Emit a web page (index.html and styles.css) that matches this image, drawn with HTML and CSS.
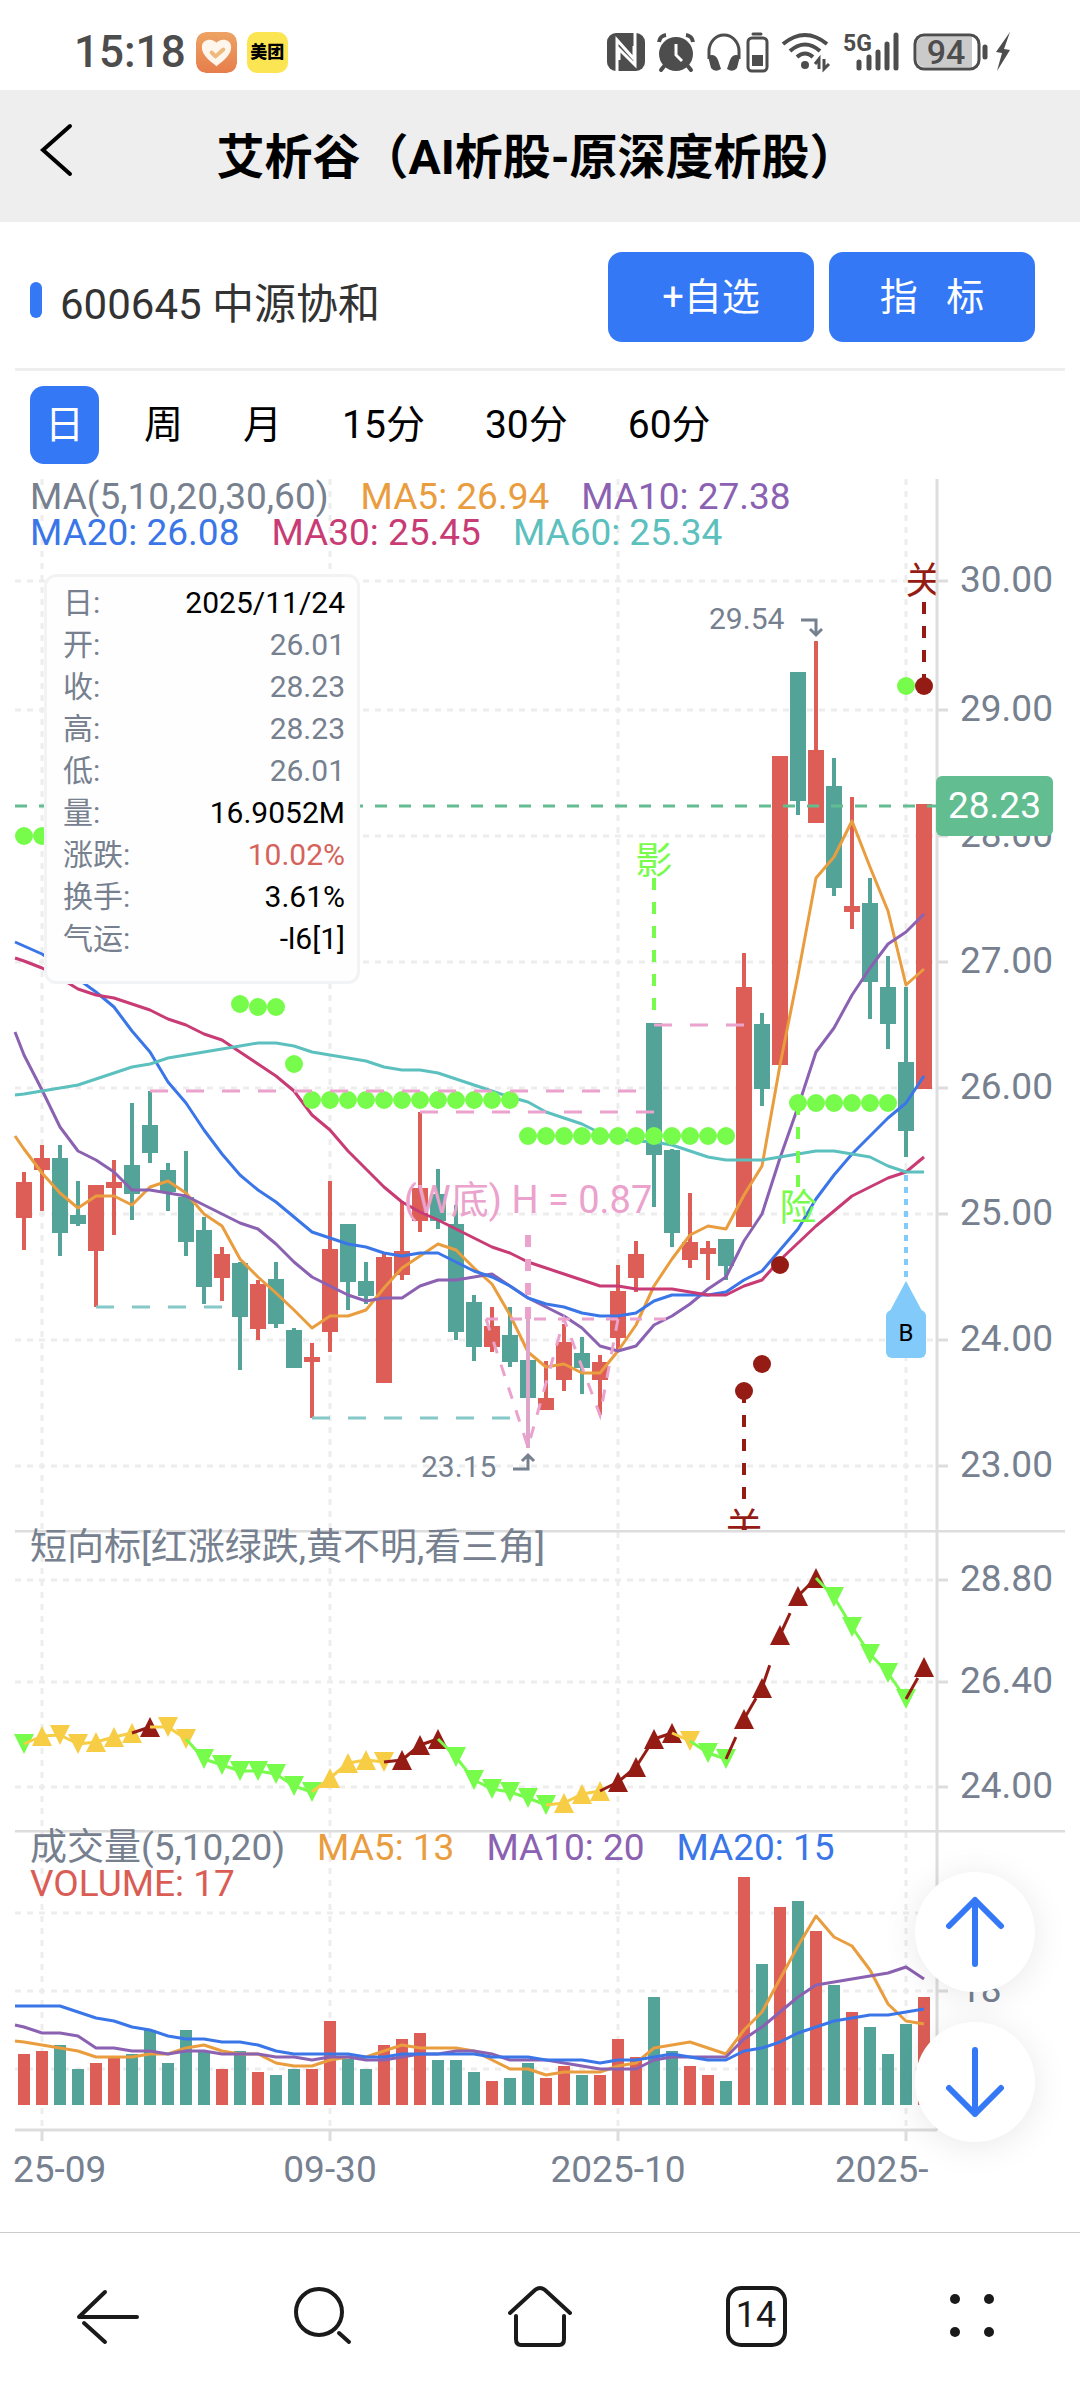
FILE: index.html
```html
<!DOCTYPE html>
<html lang="zh-CN">
<head>
  <meta charset="UTF-8" />
  <meta name="viewport" content="width=device-width, initial-scale=1" />
  <title>艾析谷（AI析股-原深度析股）</title>
  <link rel="stylesheet" href="styles.css">
</head>
<body>

  <div class="status-bar">
    <span class="clock">15:18</span>
    <svg class="app-icon" viewBox="0 0 42 42">
      <defs>
        <linearGradient id="heartBg" x1="0" y1="0" x2="0" y2="1">
          <stop offset="0" stop-color="#eda364" />
          <stop offset="1" stop-color="#e77d4c" />
        </linearGradient>
      </defs>
      <rect width="42" height="42" rx="10" fill="url(#heartBg)" />
      <path d="M21 35 C13 29 6 23 6 16 C6 10 10 8 14 8 C17 8 20 10 21 11 C22 10 25 8 28 8 C32 8 36 10 36 16 C36 23 29 29 21 35 Z" fill="#fef6ec" />
      <path d="M16 21 L20 25 L28 18" fill="none" stroke="#efb87c" stroke-width="4" stroke-linecap="round" stroke-linejoin="round" />
    </svg>
    <span class="app-icon meituan">美团</span>

    <div class="status-icons">
      <!-- NFC -->
      <svg width="38" height="40" viewBox="0 0 38 40">
        <rect x="0" y="1" width="38" height="38" rx="9" fill="#4d4d4d" />
        <path d="M10 39 V8 L27 27 V14 M28 1 V33 L12 17 V28" fill="none" stroke="#fff" stroke-width="3" />
      </svg>
      <!-- alarm -->
      <svg width="38" height="40" viewBox="0 0 38 40">
        <circle cx="19" cy="22" r="17" fill="#4d4d4d" />
        <path d="M2 10 A8 8 0 0 1 9 3 M29 3 A8 8 0 0 1 36 10" fill="none" stroke="#4d4d4d" stroke-width="4" />
        <path d="M8 33 L4 38 M30 33 L34 38" stroke="#4d4d4d" stroke-width="4" stroke-linecap="round" />
        <path d="M19 12 V23 L25 29" fill="none" stroke="#fff" stroke-width="3" />
      </svg>
      <!-- headset with its battery -->
      <svg width="62" height="40" viewBox="0 0 62 40">
        <path d="M2 27 V19 A15 16 0 0 1 32 19 V27" fill="none" stroke="#4d4d4d" stroke-width="3" />
        <path d="M1 24 Q8 21 11 28 L14 37 Q8 41 4 36 Z M33 24 Q26 21 23 28 L20 37 Q26 41 30 36 Z" fill="#4d4d4d" />
        <rect x="41" y="6" width="19" height="33" rx="4" fill="none" stroke="#4d4d4d" stroke-width="3" />
        <path d="M46 2 H54" stroke="#4d4d4d" stroke-width="3" stroke-linecap="round" />
        <rect x="45" y="23" width="11" height="11" fill="#4d4d4d" />
      </svg>
      <!-- wifi -->
      <svg width="50" height="40" viewBox="0 0 50 40">
        <g fill="none" stroke="#4d4d4d" stroke-width="4">
          <path d="M2 12 Q24 -6 46 12" />
          <path d="M9 19 Q24 6 39 19" />
          <path d="M16 25 Q24 18 32 25" />
        </g>
        <circle cx="24" cy="33" r="4" fill="#4d4d4d" />
        <path d="M38 37 V27 L34 32 M43 27 V37 L48 32" fill="none" stroke="#4d4d4d" stroke-width="3" />
      </svg>
      <!-- signal -->
      <svg width="58" height="40" viewBox="0 0 58 40">
        <text class="net-type" x="0" y="19">5G</text>
        <path d="M16 30 V36 M26 25 V36 M35 20 V36 M44 12 V36 M53 3 V36" stroke="#4d4d4d" stroke-width="5" stroke-linecap="round" />
      </svg>
      <!-- battery -->
      <svg width="98" height="40" viewBox="0 0 98 40">
        <rect x="2" y="3" width="64" height="34" rx="9" fill="#fff" stroke="#4d4d4d" stroke-width="3" />
        <path d="M12 5 H59 V35 H12 Q4 35 4 28 V12 Q4 5 12 5 Z" fill="#cacaca" />
        <text class="battery-level" x="33" y="32">94</text>
        <path d="M72 15 V25" stroke="#4d4d4d" stroke-width="5" stroke-linecap="round" />
        <path d="M97 0 L83 20 L89 21 L84 39 L97 18 L91 17 Z" fill="#4d4d4d" />
      </svg>
    </div>
  </div>

  <header class="title-bar">
    <button class="back-btn" aria-label="返回">
      <svg width="40" height="56" viewBox="0 0 40 56"><path d="M34 3 L7 27 L34 51" /></svg>
    </button>
    <h1>艾析谷（AI析股-原深度析股）</h1>
  </header>

  <main>
    <section class="stock-row">
      <h2>600645 中源协和</h2>
      <button class="primary-btn">+自选</button>
      <button class="primary-btn">指&nbsp;&nbsp; 标</button>
    </section>

    <nav class="period-tabs">
      <button class="active">日</button>
      <button>周</button>
      <button>月</button>
      <button>15分</button>
      <button>30分</button>
      <button>60分</button>
    </nav>

    <section class="pane">
      <svg id="priceChart" class="chart" viewBox="0 479 1080 1051"></svg>
      <div class="legend">
        <span>MA(5,10,20,30,60)</span>
        <span class="ma5">MA5: 26.94</span>
        <span class="ma10">MA10: 27.38</span>
        <span class="ma20">MA20: 26.08</span>
        <span class="ma30">MA30: 25.45</span>
        <span class="ma60">MA60: 25.34</span>
      </div>
      <dl class="tooltip">
        <div><dt>日:</dt><dd>2025/11/24</dd></div>
        <div><dt>开:</dt><dd class="muted">26.01</dd></div>
        <div><dt>收:</dt><dd class="muted">28.23</dd></div>
        <div><dt>高:</dt><dd class="muted">28.23</dd></div>
        <div><dt>低:</dt><dd class="muted">26.01</dd></div>
        <div><dt>量:</dt><dd>16.9052M</dd></div>
        <div><dt>涨跌:</dt><dd class="rise">10.02%</dd></div>
        <div><dt>换手:</dt><dd>3.61%</dd></div>
        <div><dt>气运:</dt><dd>-l6[1]</dd></div>
      </dl>
    </section>

    <section class="pane">
      <svg id="trendChart" class="chart" viewBox="0 1530 1080 300"></svg>
      <div class="legend">
        <span>短向标[红涨绿跌,黄不明,看三角]</span>
      </div>
    </section>

    <section class="pane">
      <svg id="volumeChart" class="chart" viewBox="0 1830 1080 402"></svg>
      <div class="legend">
        <span>成交量(5,10,20)</span>
        <span class="ma5">MA5: 13</span>
        <span class="ma10">MA10: 20</span>
        <span class="ma20">MA20: 15</span>
        <span class="volume">VOLUME: 17</span>
      </div>
      <div class="float-btns">
        <button aria-label="上一个">
          <svg width="60" height="72" viewBox="0 0 60 72"><path d="M30 68 V4 M4 30 L30 4 L56 30" /></svg>
        </button>
        <button aria-label="下一个">
          <svg width="60" height="72" viewBox="0 0 60 72"><path d="M30 4 V68 M4 42 L30 68 L56 42" /></svg>
        </button>
      </div>
    </section>
  </main>

  <nav class="bottom-nav">
    <button aria-label="后退">
      <svg width="70" height="64" viewBox="0 0 70 64"><path d="M64 32 H6 L32 7 M11 38 L32 57" /></svg>
    </button>
    <button aria-label="搜索">
      <svg width="70" height="64" viewBox="0 0 70 64"><circle cx="30" cy="27" r="23" /><path d="M50 48 L60 57" /></svg>
    </button>
    <button aria-label="主页">
      <svg width="70" height="64" viewBox="0 0 70 64"><path d="M5 28 L30 5 Q35 1 40 5 L65 28 M11 31 V54 Q11 60 16 60 H54 Q59 60 59 54 V31" /></svg>
    </button>
    <button aria-label="标签页"><span class="tab-count">14</span></button>
    <button aria-label="菜单">
      <svg class="dots" width="70" height="64" viewBox="0 0 70 64">
        <circle cx="18" cy="14" r="5" /><circle cx="52" cy="14" r="5" />
        <circle cx="18" cy="47" r="5" /><circle cx="52" cy="47" r="5" />
      </svg>
    </button>
  </nav>

  <script src="chart.js"></script>

</body>
</html>
```
FILE: styles.css
```css
* {
  box-sizing: border-box;
}
body {
  margin: 0;
  min-height: 100vh;
  display: flex;
  flex-direction: column;
  background: #fff;
  color: #000;
  font-family: Roboto, "Noto Sans CJK SC", sans-serif;
  font-size: 37px;
}
button {
  border: none;
  background: none;
  padding: 0;
  font: inherit;
  color: inherit;
  cursor: pointer;
}

/* status bar */
.status-bar {
  display: flex;
  align-items: center;
  gap: 10px;
  height: 90px;
  padding: 14px 69px 0 74px;
}
.clock {
  font-size: 44px;
  font-weight: 500;
  color: #4d4d4d;
}
.app-icon {
  width: 41px;
  height: 41px;
  border-radius: 10px;
}
.meituan {
  background: #fce553;
  font-size: 17px;
  font-weight: 900;
  line-height: 41px;
  text-align: center;
}
.status-icons {
  display: flex;
  gap: 12px;
  margin-left: auto;
}
.status-icons svg {
  overflow: visible;
}
.net-type {
  font-size: 23px;
  font-weight: 700;
  fill: #4d4d4d;
}
.battery-level {
  font-size: 34px;
  font-weight: 500;
  fill: #4d4d4d;
  text-anchor: middle;
}

/* title bar */
.title-bar {
  display: grid;
  grid-template-columns: 72px 1fr 78px;
  align-items: center;
  height: 132px;
  padding-bottom: 6px;
  background: #eee;
}
.title-bar h1 {
  margin: 0;
  font-size: 48px;
  font-weight: 700;
  text-align: center;
  white-space: nowrap;
}
.back-btn {
  padding: 0 0 4px 36px;
}
.back-btn svg {
  display: block;
}
.back-btn path {
  fill: none;
  stroke: #000;
  stroke-width: 4;
  stroke-linecap: round;
}

/* stock name and actions */
.stock-row {
  display: flex;
  align-items: center;
  gap: 15px;
  margin: 0 15px;
  padding: 30px 30px 26px 15px;
  border-bottom: 3px solid #eee;
}
.stock-row h2 {
  display: flex;
  align-items: center;
  gap: 18px;
  flex: 1;
  margin: 0;
  padding-top: 6px;
  font-size: 42px;
  font-weight: 400;
  color: #333;
}
.stock-row h2::before {
  content: "";
  width: 12px;
  height: 36px;
  border-radius: 6px;
  background: #3478f6;
}
.primary-btn {
  width: 206px;
  height: 90px;
  padding-bottom: 8px;
  border-radius: 14px;
  background: #3478f6;
  color: #fff;
  font-size: 38px;
}

/* period tabs */
.period-tabs {
  display: flex;
  gap: 30px;
  padding: 15px 30px;
}
.period-tabs button {
  height: 78px;
  padding: 0 15px 8px;
  border-radius: 14px;
  font-size: 39px;
}
.period-tabs .active {
  background: #3478f6;
  color: #fff;
}

/* chart panes */
.pane {
  position: relative;
}
.chart {
  display: block;
  width: 100%;
  font-size: 37px;
}
.legend {
  position: absolute;
  top: 0;
  left: 30px;
  right: 13%;
  display: flex;
  flex-wrap: wrap;
  column-gap: 32px;
  line-height: 36px;
  color: #76808f;
}
.ma5 { color: #e99d3e; }
.ma10 { color: #8b61b2; }
.ma20 { color: #3a76e8; }
.ma30 { color: #c83b74; }
.ma60 { color: #5cc0be; }
.volume { color: #da5d55; }

.grid {
  stroke: #ededed;
  stroke-width: 3;
  stroke-dasharray: 6 6;
}
.axis {
  stroke: #ddd;
  stroke-width: 3;
}
.axis-label, .note {
  fill: #76808f;
}
.axis-label.middle {
  text-anchor: middle;
}
.note {
  font-size: 30px;
}
.note-arrow {
  fill: none;
  stroke: #76808f;
  stroke-width: 3;
}
.line {
  fill: none;
  stroke: currentColor;
  stroke-width: 3;
  stroke-linejoin: round;
}
.up { fill: #dc5e56; stroke: #dc5e56; }
.down { fill: #53a399; stroke: #53a399; }
.wick { stroke-width: 4; }
.body, .bar { stroke: none; }
.green { fill: #78fc4c; stroke: #78fc4c; }
.red { fill: #941c14; stroke: #941c14; }
.yellow { fill: #f7cd46; stroke: #f7cd46; }
.dot, .mark, .tri { stroke: none; }
.mark { text-anchor: middle; }
.drop { stroke-width: 4; stroke-dasharray: 12 12; }
.seg { stroke-width: 3; stroke-dasharray: 24 24; }
.high-line, .low-line {
  stroke: #eba2cc;
  stroke-width: 3;
  stroke-dasharray: 18 18;
}
.low-line {
  stroke: #86c7c7;
}
.price-line {
  stroke: #62bd91;
  stroke-width: 3;
  stroke-dasharray: 12 12;
}
.price-tag {
  fill: #62bd91;
}
.price-text {
  fill: #fff;
}
.pattern {
  fill: none;
  stroke: #eba2cc;
  stroke-width: 3;
  stroke-dasharray: 12 12;
}
.pattern-stem {
  stroke: #eba2cc;
  stroke-width: 6;
  stroke-dasharray: 12 12;
}
.pattern-tail {
  stroke: #dda6c9;
  stroke-width: 4;
}
.pattern-text {
  fill: #eba2cc;
  font-size: 38px;
  text-anchor: middle;
}
.buy {
  fill: #81caf9;
}
.buy-line {
  stroke: #81caf9;
  stroke-width: 4;
  stroke-dasharray: 6 6;
}
.buy-text {
  font-size: 24px;
  text-anchor: middle;
}

/* candle details */
.tooltip {
  position: absolute;
  top: 95px;
  left: 44px;
  width: 316px;
  margin: 0;
  padding: 5px 12px 21px 16px;
  border: 3px solid #f2f3f5;
  border-radius: 12px;
  background: #fefefe;
  font-size: 30px;
  line-height: 42px;
}
.tooltip div {
  display: flex;
  justify-content: space-between;
}
.tooltip dt {
  color: #76808f;
}
.tooltip dd {
  margin: 0;
}
.tooltip .muted {
  color: #76808f;
}
.tooltip .rise {
  color: #d5635b;
}

/* floating up/down buttons */
.float-btns {
  position: absolute;
  top: 42px;
  right: 45px;
  display: flex;
  flex-direction: column;
  gap: 30px;
}
.float-btns button {
  display: flex;
  align-items: center;
  justify-content: center;
  width: 120px;
  height: 120px;
  border-radius: 50%;
  background: #fff;
  box-shadow: 0 4px 36px rgba(0, 0, 0, 0.09);
}
.float-btns path {
  fill: none;
  stroke: #3478f6;
  stroke-width: 6;
  stroke-linecap: round;
  stroke-linejoin: round;
}

/* browser navigation */
.bottom-nav {
  flex: 1;
  display: grid;
  grid-template-columns: repeat(5, 1fr);
  min-height: 168px;
  border-top: 1px solid #ccc;
}
.bottom-nav button {
  display: flex;
  align-items: center;
  justify-content: center;
}
.bottom-nav svg {
  fill: none;
  stroke: #1a1a1a;
  stroke-width: 4;
  stroke-linecap: round;
  stroke-linejoin: round;
}
.bottom-nav .dots {
  fill: #1a1a1a;
  stroke: none;
}
.tab-count {
  width: 61px;
  height: 61px;
  border: 4px solid #1a1a1a;
  border-radius: 15px;
  font-size: 36px;
  line-height: 51px;
  text-align: center;
  color: #1a1a1a;
}
```
FILE: chart.js
```js
const LEFT = 15;
const AXIS = 937;
const VOLUME_BASE = 2105;
const x = (i) => 24 + i * 18;

// [direction, high, body top, body bottom, low, volume top]
const candles = [
  ['up', 1172, 1182, 1218, 1250, 2054], ['up', 1145, 1158, 1170, 1211, 2051],
  ['down', 1145, 1158, 1233, 1256, 2045], ['down', 1181, 1215, 1224, 1226, 2069],
  ['up', 1185, 1185, 1251, 1307, 2063], ['up', 1160, 1182, 1188, 1235, 2057],
  ['down', 1103, 1165, 1194, 1220, 2054], ['down', 1091, 1125, 1153, 1163, 2030],
  ['down', 1163, 1170, 1192, 1211, 2063], ['down', 1151, 1197, 1242, 1256, 2030],
  ['down', 1217, 1230, 1287, 1304, 2051], ['up', 1247, 1254, 1278, 1301, 2069],
  ['down', 1262, 1263, 1317, 1370, 2051], ['up', 1280, 1284, 1329, 1340, 2072],
  ['down', 1262, 1279, 1324, 1328, 2075], ['down', 1328, 1330, 1368, 1368, 2069],
  ['up', 1343, 1357, 1362, 1418, 2069], ['up', 1181, 1249, 1332, 1352, 2021],
  ['down', 1224, 1224, 1282, 1310, 2059], ['down', 1262, 1281, 1296, 1304, 2069],
  ['up', 1253, 1257, 1383, 1383, 2045], ['up', 1201, 1251, 1275, 1280, 2039],
  ['up', 1112, 1188, 1221, 1232, 2033], ['down', 1169, 1194, 1221, 1229, 2060],
  ['down', 1205, 1224, 1332, 1340, 2060], ['down', 1295, 1302, 1347, 1361, 2072],
  ['up', 1307, 1326, 1347, 1352, 2081], ['down', 1307, 1335, 1362, 1367, 2078],
  ['down', 1360, 1360, 1398, 1448, 2063], ['up', 1361, 1398, 1410, 1410, 2078],
  ['up', 1324, 1342, 1380, 1391, 2066], ['down', 1337, 1353, 1368, 1394, 2075],
  ['up', 1355, 1362, 1380, 1415, 2075], ['up', 1265, 1291, 1338, 1352, 2039],
  ['up', 1241, 1254, 1278, 1292, 2057], ['down', 1023, 1023, 1155, 1207, 1997],
  ['down', 1149, 1150, 1233, 1247, 2051], ['up', 1193, 1242, 1260, 1268, 2066],
  ['up', 1241, 1248, 1254, 1280, 2075], ['down', 1239, 1239, 1266, 1280, 2081],
  ['up', 953, 987, 1227, 1227, 1877], ['down', 1013, 1024, 1089, 1106, 1964],
  ['up', 756, 756, 1065, 1065, 1907], ['down', 672, 672, 801, 815, 1901],
  ['up', 641, 750, 823, 823, 1931], ['down', 758, 786, 888, 896, 1985],
  ['up', 797, 906, 912, 929, 2012], ['down', 878, 903, 982, 1019, 2027],
  ['down', 956, 987, 1024, 1049, 2054], ['down', 987, 1062, 1131, 1157, 2024],
  ['up', 804, 804, 1089, 1089, 1997],
];

// the first value of each line sits on the left edge of the pane
const priceLines = {
  ma5: [1136, 1149, 1173, 1193, 1208, 1196, 1196, 1205, 1187, 1181, 1193, 1214, 1226, 1259, 1277, 1293, 1310, 1328, 1316, 1316, 1310, 1288, 1268, 1256, 1244, 1250, 1268, 1284, 1315, 1352, 1367, 1364, 1373, 1373, 1351, 1325, 1286, 1259, 1235, 1226, 1229, 1195, 1166, 1065, 975, 878, 857, 821, 867, 911, 985, 969],
  ma10: [1032, 1055, 1090, 1127, 1151, 1160, 1172, 1190, 1190, 1193, 1196, 1205, 1214, 1223, 1229, 1244, 1262, 1277, 1286, 1295, 1301, 1298, 1298, 1286, 1280, 1280, 1277, 1274, 1286, 1298, 1307, 1316, 1328, 1346, 1351, 1346, 1325, 1316, 1304, 1289, 1277, 1241, 1214, 1158, 1107, 1052, 1028, 995, 968, 944, 932, 914],
  ma20: [942, 946, 954, 966, 979, 992, 1007, 1031, 1052, 1082, 1103, 1130, 1154, 1175, 1190, 1202, 1217, 1232, 1238, 1244, 1247, 1253, 1256, 1253, 1253, 1262, 1271, 1277, 1286, 1298, 1304, 1307, 1313, 1316, 1316, 1313, 1301, 1295, 1295, 1295, 1292, 1280, 1271, 1250, 1229, 1199, 1175, 1154, 1136, 1118, 1103, 1076],
  ma30: [958, 961, 968, 978, 989, 995, 998, 1004, 1010, 1019, 1025, 1034, 1040, 1052, 1064, 1076, 1091, 1115, 1130, 1151, 1169, 1187, 1202, 1212, 1220, 1229, 1238, 1247, 1253, 1262, 1268, 1274, 1280, 1286, 1286, 1289, 1289, 1289, 1292, 1295, 1295, 1286, 1280, 1260, 1243, 1226, 1211, 1196, 1187, 1178, 1172, 1157],
  ma60: [1095, 1094, 1091, 1088, 1085, 1079, 1073, 1067, 1064, 1058, 1055, 1052, 1049, 1046, 1043, 1043, 1046, 1052, 1055, 1058, 1061, 1067, 1070, 1070, 1073, 1079, 1085, 1091, 1097, 1102, 1112, 1118, 1124, 1133, 1139, 1141, 1142, 1145, 1151, 1157, 1160, 1160, 1160, 1157, 1154, 1151, 1151, 1154, 1157, 1166, 1172, 1172],
};

const volumeLines = {
  ma5: [2041, 2042, 2045, 2048, 2051, 2057, 2057, 2057, 2054, 2054, 2048, 2045, 2051, 2054, 2054, 2063, 2066, 2066, 2060, 2057, 2057, 2051, 2045, 2048, 2048, 2048, 2051, 2060, 2069, 2069, 2075, 2072, 2072, 2072, 2066, 2063, 2048, 2045, 2042, 2048, 2054, 2030, 2012, 1979, 1946, 1916, 1937, 1946, 1970, 2004, 2021, 2024],
  ma10: [2025, 2027, 2033, 2033, 2036, 2048, 2048, 2051, 2051, 2054, 2051, 2051, 2054, 2054, 2054, 2057, 2057, 2060, 2057, 2057, 2060, 2060, 2057, 2054, 2054, 2051, 2051, 2054, 2060, 2060, 2060, 2063, 2066, 2069, 2069, 2069, 2060, 2057, 2057, 2057, 2057, 2039, 2027, 2012, 1997, 1985, 1982, 1979, 1976, 1973, 1967, 1979],
  ma20: [2006, 2006, 2006, 2006, 2012, 2018, 2021, 2027, 2030, 2036, 2039, 2039, 2042, 2042, 2045, 2051, 2054, 2054, 2054, 2054, 2057, 2057, 2054, 2054, 2054, 2054, 2054, 2057, 2057, 2057, 2060, 2060, 2060, 2063, 2060, 2060, 2057, 2054, 2057, 2060, 2060, 2051, 2048, 2042, 2033, 2027, 2021, 2018, 2015, 2015, 2012, 2009],
};

// short-term trend: y, colour (g/y/r), triangle pointing up (u) or down (d)
const trend = [
  [1744, 'gd'], [1736, 'yu'], [1735, 'yd'], [1744, 'yd'], [1742, 'yu'], [1737, 'yu'], [1733, 'yu'],
  [1727, 'ru'], [1727, 'yd'], [1739, 'yd'], [1759, 'gd'], [1765, 'gd'], [1771, 'gd'], [1771, 'gd'],
  [1774, 'gd'], [1786, 'gd'], [1792, 'gd'], [1778, 'yu'], [1763, 'yu'], [1760, 'yu'], [1762, 'yd'],
  [1760, 'ru'], [1745, 'ru'], [1739, 'ru'], [1757, 'gd'], [1780, 'gd'], [1789, 'gd'], [1792, 'gd'],
  [1798, 'gd'], [1805, 'gd'], [1803, 'yu'], [1794, 'yu'], [1791, 'yu'], [1782, 'ru'], [1767, 'ru'],
  [1739, 'ru'], [1733, 'ru'], [1741, 'yd'], [1753, 'gd'], [1759, 'gd'], [1719, 'ru'], [1688, 'ru'],
  [1635, 'ru'], [1596, 'ru'], [1578, 'ru'], [1597, 'gd'], [1627, 'gd'], [1654, 'gd'], [1673, 'gd'],
  [1699, 'gd'], [1667, 'ru'],
];

// [from candle, to candle, y, colour]
const dots = [
  [0, 1, 836, 'green'], [12, 12, 1004, 'green'], [13, 14, 1007, 'green'], [15, 15, 1064, 'green'],
  [16, 27, 1100, 'green'], [28, 39, 1136, 'green'], [43, 48, 1103, 'green'], [49, 49, 686, 'green'],
  [50, 50, 686, 'red'], [42, 42, 1265, 'red'], [41, 41, 1364, 'red'], [40, 40, 1391, 'red'],
];

function line(cls, x1, y1, x2, y2) {
  return `<line class="${cls}" x1="${x1}" y1="${y1}" x2="${x2}" y2="${y2}" />`;
}

function text(cls, tx, ty, value) {
  return `<text class="${cls}" x="${tx}" y="${ty}">${value}</text>`;
}

function verticalGrid(top, bottom) {
  return [1, 17, 33, 49].map((i) => line('grid', x(i), top, x(i), bottom)).join('');
}

function levels(list) {
  return list.map(([y, label]) =>
    line('grid', LEFT, y, AXIS, y) +
    (label ? line('axis', AXIS, y, 948, y) + text('axis-label', 960, y + 11, label) : '')
  ).join('');
}

function maLines(lines) {
  return Object.entries(lines).map(([name, values]) => {
    const points = values.map((y, n) => `${n ? x(n - 1) : LEFT},${y}`).join(' ');
    return `<polyline class="line ${name}" points="${points}" />`;
  }).join('');
}

function drawPrice() {
  let out = '<clipPath id="plot"><rect x="15" y="479" width="921" height="1051" /></clipPath>';
  out += verticalGrid(479, 1530);
  out += levels([
    [581, '30.00'], [710, '29.00'], [836, '28.00'], [962, '27.00'],
    [1088, '26.00'], [1214, '25.00'], [1340, '24.00'], [1466, '23.00'],
  ]);

  candles.forEach(([dir, high, top, bottom, low], i) => {
    out += line(`${dir} wick`, x(i), high, x(i), low);
    out += `<rect class="${dir} body" x="${x(i) - 8}" y="${top}" width="16" height="${bottom - top}" />`;
  });
  out += maLines(priceLines);

  // double bottom
  out += line('pattern-stem', 528, 1235, 528, 1319) + line('pattern-tail', 528, 1319, 528, 1448);
  out += '<path class="pattern" d="M486 1319 H666 M486 1319 L528 1447 L564 1319 L600 1415 L618 1319" />';
  out += text('pattern-text', 528, 1213, '(W底) H = 0.87');

  out += line('drop green', 654, 878, 654, 1010) + line('drop green', 798, 1103, 798, 1188);
  out += line('drop red', 924, 602, 924, 686) + line('drop red', 744, 1391, 744, 1500);
  dots.forEach(([from, to, y, colour]) => {
    for (let i = from; i <= to; i++) {
      out += `<circle class="dot ${colour}" cx="${x(i)}" cy="${y}" r="9" />`;
    }
  });

  out += line('high-line', 150, 1091, 636, 1091) + line('high-line', 420, 1112, 654, 1112);
  out += line('high-line', 654, 1025, 744, 1025);
  out += line('low-line', 96, 1307, 222, 1307) + line('low-line', 312, 1418, 510, 1418);

  out += text('mark green', 654, 874, '影') + text('mark green', 798, 1221, '险');
  out += `<g clip-path="url(#plot)">${text('mark red', 924, 594, '关')}${text('mark red', 744, 1540, '关')}</g>`;

  out += text('note', 709, 629, '29.54') + text('note', 421, 1477, '23.15');
  out += '<path class="note-arrow" d="M801 620 H816 V635 M810 629 L816 635 L822 629" />';
  out += '<path class="note-arrow" d="M513 1469 H528 V1455 M522 1461 L528 1455 L534 1461" />';

  // buy marker
  out += line('buy-line', 906, 1175, 906, 1278);
  out += '<path class="buy" d="M906 1281 L922 1311 H890 Z" /><rect class="buy" x="886" y="1310" width="40" height="48" rx="6" />';
  out += text('buy-text', 906, 1341, 'B');

  out += line('axis', AXIS, 479, AXIS, 1530);
  out += line('price-line', LEFT, 806, 936, 806);
  out += '<rect class="price-tag" x="936" y="776" width="117" height="60" rx="6" />';
  out += text('price-text', 948, 818, '28.23');
  document.getElementById('priceChart').innerHTML = out;
}

function drawTrend() {
  const colours = { g: 'green', y: 'yellow', r: 'red' };
  let out = verticalGrid(1532, 1830) + levels([[1580, '28.80'], [1682, '26.40'], [1787, '24.00']]);
  trend.forEach(([y, kind], i) => {
    const colour = colours[kind[0]];
    const tip = kind[1] === 'u' ? -10 : 10;
    if (i > 0) out += line(`seg ${colour}`, x(i - 1), trend[i - 1][0], x(i), y);
    out += `<path class="tri ${colour}" d="M${x(i)} ${y + tip} L${x(i) - 10} ${y - tip} H${x(i) + 10} Z" />`;
  });
  out += line('axis', LEFT, 1531, 1065, 1531) + line('axis', AXIS, 1530, AXIS, 1830);
  document.getElementById('trendChart').innerHTML = out;
}

function drawVolume() {
  let out = verticalGrid(1832, 2130) + levels([[1913], [1991, '18'], [2069]]);
  candles.forEach((c, i) => {
    out += `<rect class="${c[0]} bar" x="${x(i) - 6}" y="${c[5]}" width="12" height="${VOLUME_BASE - c[5]}" />`;
  });
  out += maLines(volumeLines);
  out += line('axis', LEFT, 1831, 1065, 1831) + line('axis', AXIS, 1830, AXIS, 2130);
  out += line('axis', LEFT, 2130, AXIS, 2130);
  [1, 17, 33, 49].forEach((i) => { out += line('axis', x(i), 2130, x(i), 2141); });
  out += text('axis-label', 13, 2182, '25-09') + text('axis-label middle', 330, 2182, '09-30');
  out += text('axis-label middle', 618, 2182, '2025-10') + text('axis-label', 835, 2182, '2025-');
  document.getElementById('volumeChart').innerHTML = out;
}

drawPrice();
drawTrend();
drawVolume();
```
